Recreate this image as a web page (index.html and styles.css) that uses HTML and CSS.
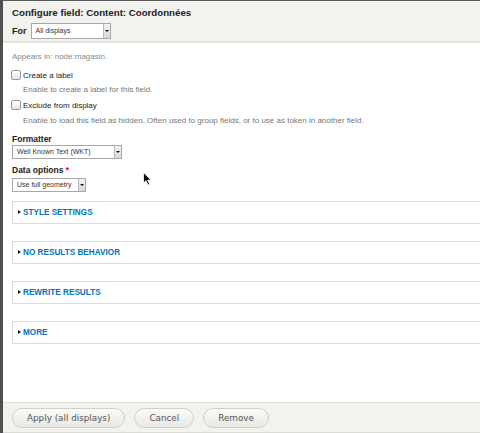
FILE: index.html
```html
<!DOCTYPE html>
<html>
<head>
<meta charset="utf-8">
<link rel="stylesheet" href="styles.css">
</head>
<body>
<div class="dialog">
  <div class="head">
    <h1 class="title">Configure field: Content: Coordonnées</h1>
    <div class="for-row">
      <span class="for-label">For</span>
      <span class="select sel-for"><span class="sel-text">All displays</span><span class="sel-arrow"><span class="tri"></span></span></span>
    </div>
  </div>
  <div class="content">
    <div class="appears">Appears in: node:magasin.</div>
    <div class="check-row row-1"><span class="checkbox"></span><span class="check-label">Create a label</span></div>
    <div class="desc desc-1">Enable to create a label for this field.</div>
    <div class="check-row row-2"><span class="checkbox"></span><span class="check-label">Exclude from display</span></div>
    <div class="desc desc-2">Enable to load this field as hidden. Often used to group fields, or to use as token in another field.</div>
    <div class="field-label label-fmt">Formatter</div>
    <span class="select sel-fmt"><span class="sel-text">Well Known Text (WKT)</span><span class="sel-arrow"><span class="tri"></span></span></span>
    <div class="field-label label-data">Data options <span class="req">*</span></div>
    <span class="select sel-data"><span class="sel-text">Use full geometry</span><span class="sel-arrow"><span class="tri"></span></span></span>
    <div class="fieldsets">
      <div class="fieldset"><span class="caret"></span><span class="legend">STYLE SETTINGS</span></div>
      <div class="fieldset"><span class="caret"></span><span class="legend">NO RESULTS BEHAVIOR</span></div>
      <div class="fieldset"><span class="caret"></span><span class="legend">REWRITE RESULTS</span></div>
      <div class="fieldset"><span class="caret"></span><span class="legend">MORE</span></div>
    </div>
  </div>
  <div class="foot">
    <span class="btn">Apply (all displays)</span>
    <span class="btn">Cancel</span>
    <span class="btn">Remove</span>
  </div>
  <svg class="cursor" width="9" height="14" viewBox="0 0 9 14"><path d="M0.5 0.5 L0.5 11 L3 8.6 L5 13 L6.6 12.3 L4.7 8 L8 8 Z" fill="#000" stroke="#fff" stroke-width="0.8"/></svg>
</div>
</body>
</html>
```
FILE: styles.css
```css
html, body {
  margin: 0;
  padding: 0;
  background: #fff;
}
body {
  font-family: "Liberation Sans", Arial, sans-serif;
  color: #333;
}
.dialog {
  position: relative;
  box-sizing: border-box;
  width: 480px;
  height: 433px;
  border-top: 1px solid #5a5a5a;
  border-left: 3px solid #4f4f4f;
  display: flex;
  flex-direction: column;
  overflow: hidden;
}
.head {
  background: #f2f2ee;
  border-bottom: 2px solid #e4e4dd;
  padding: 5px 9px 4px 9px;
  height: 42px;
  box-sizing: border-box;
}
.title {
  margin: 0;
  font-size: 9.7px;
  line-height: 14px;
  font-weight: bold;
  color: #222;
}
.for-row {
  display: flex;
  align-items: center;
  gap: 4px;
  margin-top: 3px;
}
.for-label {
  font-weight: bold;
  font-size: 9px;
  color: #222;
}
.select {
  display: inline-flex;
  align-items: stretch;
  box-sizing: border-box;
  height: 14px;
  border: 1px solid #a8a8a8;
  background: #fff;
  font-size: 7px;
  color: #333;
  vertical-align: top;
}
.sel-text {
  flex: 1;
  padding: 0 4px;
  line-height: 12px;
  white-space: nowrap;
}
.sel-arrow {
  width: 6px;
  border-left: 1px solid #b8b8b8;
  background: linear-gradient(#f4f4f4, #d8d8d8);
  display: flex;
  align-items: center;
  justify-content: center;
}
.tri {
  width: 0;
  height: 0;
  border-left: 2px solid transparent;
  border-right: 2px solid transparent;
  border-top: 2px solid #111;
}
.sel-for { width: 80px; height: 16px; }
.sel-for .sel-text { line-height: 14px; }
.sel-fmt { width: 110px; margin-top: 1.5px; }
.sel-data { width: 74px; margin-top: 3px; }
.content {
  flex: 1;
  padding: 9px 0 0 9px;
  font-size: 8px;
  display: flex;
  flex-direction: column;
  align-items: flex-start;
}
.appears {
  color: #888;
  line-height: 10px;
  font-size: 8px;
}
.check-row {
  display: flex;
  align-items: center;
  height: 10px;
}
.row-1 { margin-top: 8px; }
.row-2 { margin-top: 5.5px; }
.checkbox {
  box-sizing: border-box;
  width: 10px;
  height: 10px;
  border: 1px solid #9a9a9a;
  border-radius: 2px;
  background: linear-gradient(#fff, #e6e6e6);
  margin-right: 2px;
  margin-left: -1px;
}
.check-label {
  font-size: 8px;
  color: #222;
}
.desc {
  padding-left: 11px;
  color: #777;
  font-size: 8px;
  line-height: 10px;
}
.desc-1 { margin-top: 4.5px; }
.desc-2 { margin-top: 6px; }
.field-label {
  font-weight: bold;
  font-size: 8.5px;
  color: #222;
  line-height: 10px;
}
.label-fmt { margin-top: 7.5px; }
.label-data { margin-top: 6px; }
.req { color: #e00; }
.fieldsets {
  margin-top: 8.5px;
  display: flex;
  flex-direction: column;
  gap: 17px;
}
.fieldset {
  box-sizing: border-box;
  height: 23px;
  width: 520px;
  border: 1px solid #dcdcdc;
  background: #fff;
  display: flex;
  align-items: center;
  padding-left: 5px;
}
.caret {
  width: 0;
  height: 0;
  border-top: 2px solid transparent;
  border-bottom: 2px solid transparent;
  border-left: 3px solid #111;
  margin-right: 2px;
}
.legend {
  color: #0074bd;
  font-weight: bold;
  font-size: 8.2px;
}
.foot {
  background: #f2f2ee;
  border-top: 1px solid #e0e0da;
  border-bottom: 1px solid #dcdcd5;
  height: 31px;
  box-sizing: border-box;
  display: flex;
  align-items: center;
  gap: 9px;
  padding-left: 9px;
  padding-top: 1px;
}
.btn {
  display: inline-flex;
  align-items: center;
  justify-content: center;
  box-sizing: border-box;
  height: 20px;
  padding: 0 14px;
  border: 1px solid #cfcfc8;
  border-radius: 10px;
  background: linear-gradient(#fbfbfa, #e8e8e3);
  font-family: "DejaVu Sans", Verdana, sans-serif;
  font-size: 8.8px;
  color: #555;
}
.cursor {
  position: absolute;
  left: 140px;
  top: 171px;
}
```
